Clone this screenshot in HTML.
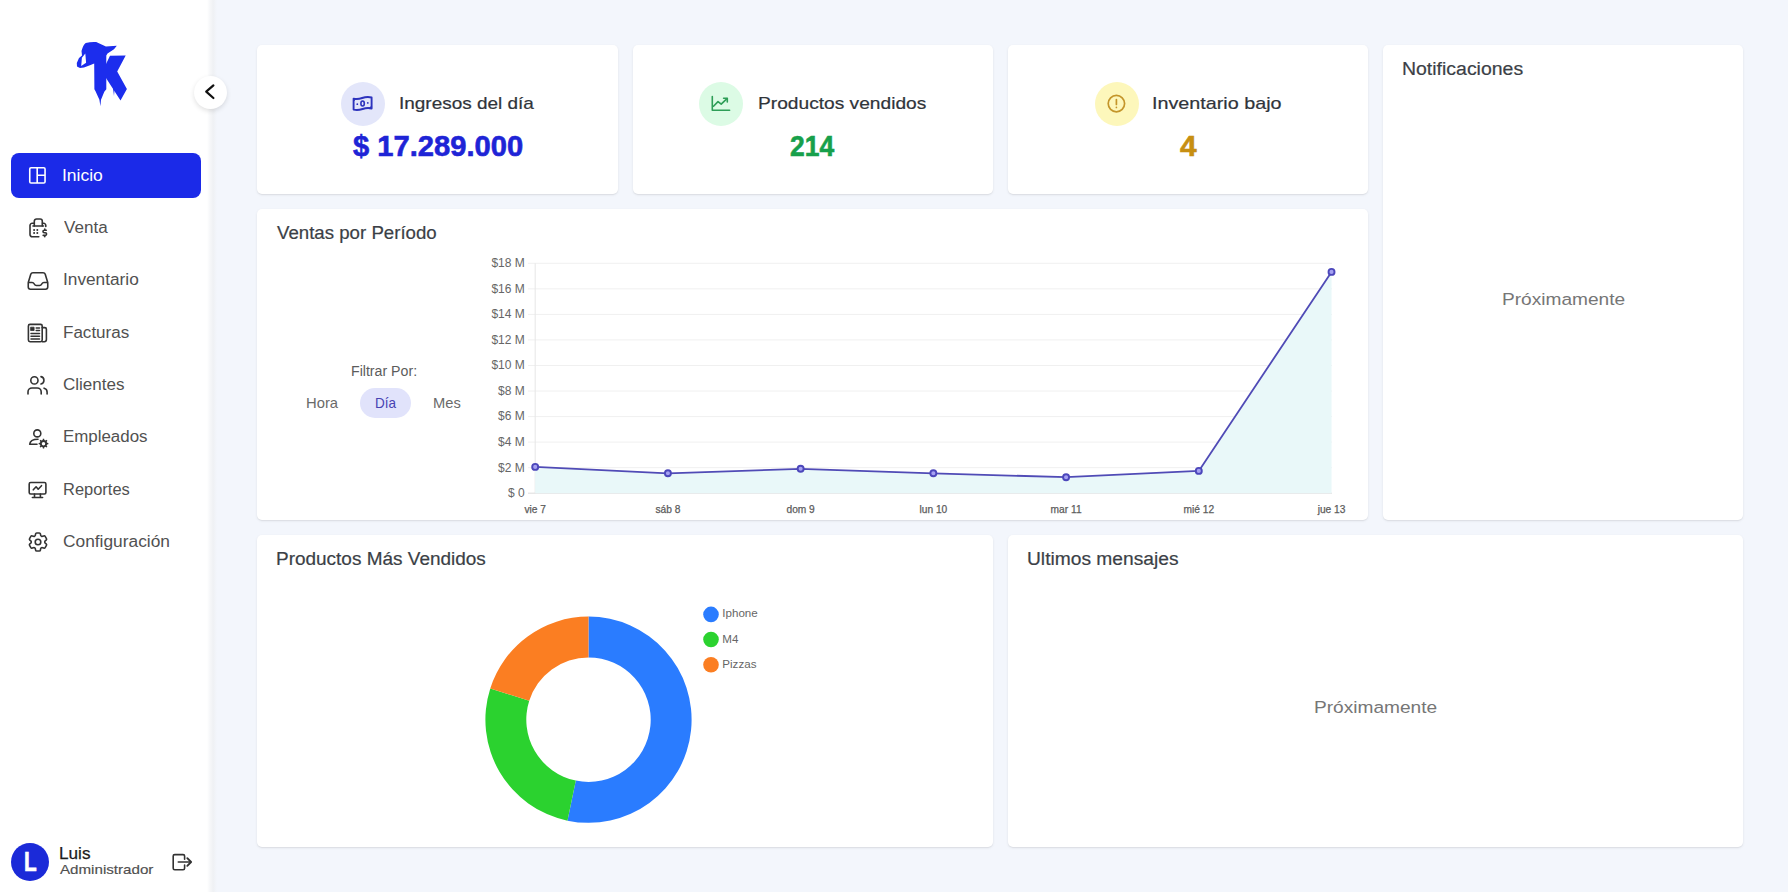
<!DOCTYPE html>
<html lang="es">
<head>
<meta charset="utf-8">
<title>Dashboard</title>
<style>
*{margin:0;padding:0;box-sizing:border-box;}
html,body{width:1788px;height:892px;overflow:hidden;}
body{background:#f3f6fc;font-family:"Liberation Sans",sans-serif;position:relative;color:#333;}
.abs{position:absolute;}
.t{position:absolute;white-space:nowrap;line-height:1;transform-origin:0 0;}
#sidebar{position:absolute;left:0;top:0;width:212px;height:892px;background:#fff;}
.card{position:absolute;background:#fff;border-radius:5px;box-shadow:0 1px 3px rgba(0,0,0,0.07),0 1px 1px rgba(0,0,0,0.05);}
.ico{position:absolute;width:24px;height:24px;}
</style>
</head>
<body>
<div id="sidebar">
  <div class="abs" style="left:207px;top:0;width:10px;height:892px;background:linear-gradient(90deg,#ffffff 0%,#f6f7f9 30%,#eff1f4 62%,#f3f6fc 100%);"></div>
  <svg class="abs" style="left:0;top:0" width="212" height="120" viewBox="0 0 212 120">
    <path fill="#1c2ded" d="M85.7 42.9 Q91 41.8 96.2 42.1 L105.9 46.5 L116.8 45.7 L114 49.3 L107.5 53.4 L106.3 55.5 L106.3 89.3 L104.3 91.7 L101 99.8 L100.4 106.3 L99.4 99.8 L95.4 90.9 L94.4 89.3 L94.2 63.5 L90.6 65.1 L84 67.5 L80 68 L77 66.5 L76.8 63 L79 58 L82 55.5 L81.5 51 Q83 45 85.7 42.9 Z"/>
    <path fill="#fff" d="M85.3 53.6 L86.1 62.7 L81.2 66 L81.9 57.8 Z"/>
    <path fill="#1c2ded" d="M110 55.8 L125.7 55.4 L117.2 71.5 L126.9 88.9 L120.5 100.6 L106 78 L106 63.9 Z"/>
    <path fill="#1c2ded" d="M113 88.3 L114.6 88.3 L114 96 Z"/>
  </svg>
  <div class="abs" style="left:194px;top:76px;width:33px;height:33px;border-radius:50%;background:#fff;box-shadow:0 2px 5px rgba(0,0,0,0.12);"></div>
  <svg class="abs" style="left:194px;top:76px" width="33" height="33" viewBox="0 0 33 33">
    <path d="M19.4 9.4 L12.2 15.6 L19.4 22" fill="none" stroke="#111" stroke-width="2.2" stroke-linecap="round" stroke-linejoin="round"/>
  </svg>
  <div class="abs" style="left:11px;top:153px;width:190px;height:45px;border-radius:8px;background:#1b2ae8;"></div>
  <svg class="ico" style="left:25px;top:163px" viewBox="0 0 24 24" fill="none" stroke="#fff" stroke-width="1.6">
    <rect x="4.75" y="4.75" width="15.3" height="15.3" rx="1.3"/>
    <path d="M12.2 4.75 V20.05 M12.2 12.3 H20.05"/>
  </svg>
  <svg class="ico" style="left:25.5px;top:216px" viewBox="0 0 24 24" fill="none" stroke="#333" stroke-width="1.6" stroke-linecap="round" stroke-linejoin="round">
    <path d="M8.3 10 V5.2 a2.2 2.2 0 0 1 2.2 -2.2 h3.6 a2.2 2.2 0 0 1 2.2 2.2 V10"/>
    <path d="M7 10 H17.5"/>
    <path d="M8 7.3 H6.2 a2.2 2.2 0 0 0 -2.2 2.2 V18.6 a2.2 2.2 0 0 0 2.2 2.2 H12.8"/>
    <path d="M16.6 7.3 H17.6 a2.2 2.2 0 0 1 2.2 2.2 V10.4"/>
    <path d="M8.1 14 v.01 M11.3 14 v.01 M8.1 17 v.01 M11.3 17 v.01" stroke-width="2"/>
    <path d="M20.3 14.2 h-2 a1.2 1.2 0 0 0 0 2.6 h1 a1.2 1.2 0 0 1 0 2.6 h-2.1 M18.8 13 v1.2 M18.8 19.4 v1.4"/>
  </svg>
  <svg class="ico" style="left:25.5px;top:268.5px" viewBox="0 0 24 24" fill="none" stroke="#333" stroke-width="1.6" stroke-linecap="round" stroke-linejoin="round">
    <path d="M2.25 13.5h3.86a2.25 2.25 0 012.012 1.244l.256.512a2.25 2.25 0 002.013 1.244h3.218a2.25 2.25 0 002.013-1.244l.256-.512a2.25 2.25 0 012.013-1.244h3.859m-19.5.338V18a2.25 2.25 0 002.25 2.250h15A2.25 2.25 0 0021.75 18v-4.162c0-.224-.034-.447-.1-.661L19.24 5.338a2.25 2.25 0 00-2.150-1.588H6.911a2.25 2.25 0 00-2.15 1.588L2.35 13.177a2.25 2.25 0 00-.1.661z"/>
  </svg>
  <svg class="ico" style="left:25px;top:320.5px" viewBox="0 0 24 24" fill="none" stroke="#333" stroke-width="1.6" stroke-linecap="round" stroke-linejoin="round">
    <rect x="3.4" y="3.4" width="13.8" height="17.3" rx="1.6"/>
    <path d="M17.2 6.6 H19.8 a1.6 1.6 0 0 1 1.6 1.6 V18.6 a2.1 2.1 0 0 1 -2.1 2.1 H17.2"/>
    <rect x="5.9" y="6.2" width="3.2" height="3.3" fill="#333" stroke-width="0.8"/>
    <path d="M11.2 6.9 h3.3 M11.2 9.4 h3.3 M6 12.5 h8.5 M6 15.3 h8.5 M6 18 h8.5" stroke-width="1.5"/>
  </svg>
  <svg class="ico" style="left:25px;top:373px" viewBox="0 0 24 24" fill="none" stroke="#333" stroke-width="1.6" stroke-linecap="round" stroke-linejoin="round">
    <circle cx="9.4" cy="7.4" r="3.6"/>
    <path d="M3 21v-2a4 4 0 0 1 4 -4h5.2a4 4 0 0 1 4 4v2"/>
    <path d="M16 3.6a3.8 3.8 0 0 1 0 7.4"/>
    <path d="M22.1 21v-2a4 4 0 0 0 -3 -3.85"/>
  </svg>
  <svg class="ico" style="left:25px;top:425px" viewBox="0 0 24 24" fill="none" stroke="#333" stroke-width="1.6" stroke-linecap="round" stroke-linejoin="round">
    <circle cx="12.3" cy="8.4" r="3.5"/>
    <path d="M13 14.3 C8.5 14.3 5 15.8 4.7 19.3 H12"/>
    <path d="M17.64 15.10 L17.85 13.84 L19.15 13.84 L19.36 15.10 L20.43 15.55 L21.47 14.80 L22.40 15.73 L21.65 16.77 L22.10 17.84 L23.36 18.05 L23.36 19.35 L22.10 19.56 L21.65 20.63 L22.40 21.67 L21.47 22.60 L20.43 21.85 L19.36 22.30 L19.15 23.56 L17.85 23.56 L17.64 22.30 L16.57 21.85 L15.53 22.60 L14.60 21.67 L15.35 20.63 L14.90 19.56 L13.64 19.35 L13.64 18.05 L14.90 17.84 L15.35 16.77 L14.60 15.73 L15.53 14.80 L16.57 15.55 Z M20.25 18.70 A1.75 1.75 0 1 0 16.75 18.70 A1.75 1.75 0 1 0 20.25 18.70 Z" fill="#333" stroke="none" fill-rule="evenodd"/>
  </svg>
  <svg class="ico" style="left:25px;top:477px" viewBox="0 0 24 24" fill="none" stroke="#333" stroke-width="1.6" stroke-linecap="round" stroke-linejoin="round">
    <rect x="4.2" y="5.5" width="16.7" height="11.5" rx="1.5"/>
    <path d="M9.5 17 v3.4 M15.4 17 v3.4 M7.4 20.5 H17.6"/>
    <path d="M8.3 12.8 L11.1 9.8 L13.2 12.2 L16.5 8.7"/>
  </svg>
  <svg class="ico" style="left:25.5px;top:529.5px" viewBox="0 0 24 24" fill="none" stroke="#333" stroke-width="1.6" stroke-linecap="round" stroke-linejoin="round">
    <path d="M9.594 3.94c.09-.542.56-.94 1.11-.94h2.593c.55 0 1.02.398 1.11.94l.213 1.281c.063.374.313.686.645.87.074.04.147.083.22.127.325.196.72.257 1.075.124l1.217-.456a1.125 1.125 0 011.37.49l1.296 2.247a1.125 1.125 0 01-.26 1.431l-1.003.827c-.293.241-.438.613-.43.992a7.723 7.723 0 010 .255c-.008.378.137.75.43.991l1.004.827c.424.35.534.955.26 1.430l-1.298 2.247a1.125 1.125 0 01-1.369.491l-1.217-.456c-.355-.133-.75-.072-1.076.124a6.47 6.47 0 01-.22.128c-.331.183-.581.495-.644.869l-.213 1.281c-.09.543-.56.94-1.11.94h-2.594c-.55 0-1.019-.398-1.11-.94l-.213-1.281c-.062-.374-.312-.686-.644-.87a6.52 6.52 0 01-.22-.127c-.325-.196-.72-.257-1.076-.124l-1.217.456a1.125 1.125 0 01-1.369-.49l-1.297-2.247a1.125 1.125 0 01.26-1.431l1.004-.827c.292-.24.437-.613.43-.991a6.932 6.932 0 010-.255c.007-.38-.138-.751-.43-.992l-1.004-.827a1.125 1.125 0 01-.26-1.430l1.297-2.247a1.125 1.125 0 011.37-.491l1.216.456c.356.133.751.072 1.076-.124.072-.044.146-.086.22-.128.332-.183.582-.495.644-.869l.214-1.28z"/>
    <circle cx="12" cy="12" r="2.8"/>
  </svg>
  <div class="abs" style="left:11px;top:843px;width:38px;height:38px;border-radius:50%;background:#1b2ad8;"></div>
  <div class="t" style="left:24px;top:848px;font-size:28px;font-weight:bold;color:#fff;transform:scaleX(0.74);-webkit-text-stroke:0.7px #fff;">L</div>
  <svg class="abs" style="left:170px;top:850px" width="24" height="24" viewBox="0 0 24 24" fill="none" stroke="#333" stroke-width="1.6" stroke-linecap="round" stroke-linejoin="round">
    <path d="M14.6 9.3 V6.1 a1.5 1.5 0 0 0 -1.5 -1.5 H4.7 a1.5 1.5 0 0 0 -1.5 1.5 V18.2 a1.5 1.5 0 0 0 1.5 1.5 H13.1 a1.5 1.5 0 0 0 1.5 -1.5 V15"/>
    <path d="M8.3 12 H20.4"/>
    <path d="M17.3 8.2 L21.1 12 L17.3 15.8" stroke-width="1.9"/>
  </svg>
</div>

<div class="card" style="left:257px;top:45px;width:360.5px;height:148.5px;"></div>
<div class="card" style="left:633px;top:45px;width:360px;height:148.5px;"></div>
<div class="card" style="left:1008px;top:45px;width:360px;height:148.5px;"></div>
<div class="card" style="left:1383px;top:45px;width:360px;height:475px;"></div>
<div class="card" style="left:257px;top:208.5px;width:1111px;height:311.5px;"></div>
<div class="card" style="left:257px;top:535px;width:736px;height:312px;"></div>
<div class="card" style="left:1008px;top:535px;width:735px;height:312px;"></div>

<div class="abs" style="left:341px;top:82px;width:44px;height:44px;border-radius:50%;background:#e3e6fa;"></div>
<svg class="abs" style="left:350px;top:94px" width="26" height="18" viewBox="0 0 26 18" fill="none" stroke="#2d33bd" stroke-width="1.9" stroke-linejoin="round">
  <path d="M3.6 4.6 C6.5 5.4 9.2 5 12.2 4 C15.2 3 18.5 2.7 21.6 3.5 V14.5 C18.5 13.7 15.6 14 12.6 15 C9.6 16 6.5 16.4 3.6 15.6 Z"/>
  <ellipse cx="12.6" cy="9.5" rx="1.7" ry="2.5" stroke-width="1.6"/>
  <circle cx="7.3" cy="10.2" r="0.9" fill="#2d33bd" stroke="none"/>
  <circle cx="17.8" cy="8.9" r="0.9" fill="#2d33bd" stroke="none"/>
  <path d="M3.6 4.6 L6 5.1 L3.6 7 Z M21.6 14.5 L19.2 14 L21.6 12.2 Z" fill="#2d33bd" stroke-width="0.8"/>
</svg>
<div class="abs" style="left:699px;top:82px;width:44px;height:44px;border-radius:50%;background:#dcfbe5;"></div>
<svg class="abs" style="left:709px;top:93px" width="24" height="20" viewBox="0 0 24 20" fill="none" stroke="#2d9e57" stroke-width="1.6" stroke-linecap="round" stroke-linejoin="round">
  <path d="M3.3 3.5 V17.2 H20.6"/>
  <path d="M4.5 13.2 L9 8.6 L12.2 11.2 L18 5.6"/>
  <path d="M14.6 5.2 H18.3 V8.9"/>
</svg>
<div class="abs" style="left:1095px;top:82px;width:44px;height:44px;border-radius:50%;background:#fdf7bb;"></div>
<svg class="abs" style="left:1104px;top:91px" width="25" height="25" viewBox="0 0 25 25" fill="none" stroke="#c4952a" stroke-width="1.7" stroke-linecap="round">
  <circle cx="12.4" cy="12.6" r="8.2"/>
  <path d="M12.4 8.6 V13.4 M12.4 16.4 v.01"/>
</svg>
<div class="abs" style="left:360px;top:388px;width:51px;height:29.5px;border-radius:15px;background:#e1e3fb;"></div>

<svg class="abs" style="left:0;top:0;pointer-events:none" width="1788" height="892" viewBox="0 0 1788 892">
<line x1="528" y1="493.20" x2="1332" y2="493.20" stroke="#dcdcdc" stroke-width="1"/>
<line x1="528" y1="467.66" x2="1332" y2="467.66" stroke="#f0f0f0" stroke-width="1"/>
<line x1="528" y1="442.11" x2="1332" y2="442.11" stroke="#f0f0f0" stroke-width="1"/>
<line x1="528" y1="416.57" x2="1332" y2="416.57" stroke="#f0f0f0" stroke-width="1"/>
<line x1="528" y1="391.02" x2="1332" y2="391.02" stroke="#f0f0f0" stroke-width="1"/>
<line x1="528" y1="365.48" x2="1332" y2="365.48" stroke="#f0f0f0" stroke-width="1"/>
<line x1="528" y1="339.93" x2="1332" y2="339.93" stroke="#f0f0f0" stroke-width="1"/>
<line x1="528" y1="314.39" x2="1332" y2="314.39" stroke="#f0f0f0" stroke-width="1"/>
<line x1="528" y1="288.84" x2="1332" y2="288.84" stroke="#f0f0f0" stroke-width="1"/>
<line x1="528" y1="263.30" x2="1332" y2="263.30" stroke="#f0f0f0" stroke-width="1"/>
<line x1="535.2" y1="263.3" x2="535.2" y2="493.2" stroke="#e6e6e6" stroke-width="1"/>
<polygon points="535.20,493.2 535.20,466.90 667.92,473.30 800.64,468.80 933.36,473.30 1066.08,477.20 1198.80,470.90 1331.52,271.90 1331.52,493.2" fill="#e9f8f9"/>
<polyline points="535.20,466.90 667.92,473.30 800.64,468.80 933.36,473.30 1066.08,477.20 1198.80,470.90 1331.52,271.90" fill="none" stroke="#504bb6" stroke-width="1.8" stroke-linejoin="round"/>
<circle cx="535.20" cy="466.90" r="3.0" fill="#a5a1f2" stroke="#4c47bb" stroke-width="1.9"/>
<circle cx="667.92" cy="473.30" r="3.0" fill="#a5a1f2" stroke="#4c47bb" stroke-width="1.9"/>
<circle cx="800.64" cy="468.80" r="3.0" fill="#a5a1f2" stroke="#4c47bb" stroke-width="1.9"/>
<circle cx="933.36" cy="473.30" r="3.0" fill="#a5a1f2" stroke="#4c47bb" stroke-width="1.9"/>
<circle cx="1066.08" cy="477.20" r="3.0" fill="#a5a1f2" stroke="#4c47bb" stroke-width="1.9"/>
<circle cx="1198.80" cy="470.90" r="3.0" fill="#a5a1f2" stroke="#4c47bb" stroke-width="1.9"/>
<circle cx="1331.52" cy="271.90" r="3.0" fill="#a5a1f2" stroke="#4c47bb" stroke-width="1.9"/>
<text x="524.8" y="497.10" text-anchor="end" font-family="Liberation Sans" font-size="12" fill="#666">$ 0</text>
<text x="524.8" y="471.56" text-anchor="end" font-family="Liberation Sans" font-size="12" fill="#666">$2 M</text>
<text x="524.8" y="446.01" text-anchor="end" font-family="Liberation Sans" font-size="12" fill="#666">$4 M</text>
<text x="524.8" y="420.47" text-anchor="end" font-family="Liberation Sans" font-size="12" fill="#666">$6 M</text>
<text x="524.8" y="394.92" text-anchor="end" font-family="Liberation Sans" font-size="12" fill="#666">$8 M</text>
<text x="524.8" y="369.38" text-anchor="end" font-family="Liberation Sans" font-size="12" fill="#666">$10 M</text>
<text x="524.8" y="343.83" text-anchor="end" font-family="Liberation Sans" font-size="12" fill="#666">$12 M</text>
<text x="524.8" y="318.29" text-anchor="end" font-family="Liberation Sans" font-size="12" fill="#666">$14 M</text>
<text x="524.8" y="292.74" text-anchor="end" font-family="Liberation Sans" font-size="12" fill="#666">$16 M</text>
<text x="524.8" y="267.20" text-anchor="end" font-family="Liberation Sans" font-size="12" fill="#666">$18 M</text>
<text x="535.20" y="512.6" text-anchor="middle" font-family="Liberation Sans" font-size="10.2" fill="#5c5c5c" stroke="#5c5c5c" stroke-width="0.25">vie 7</text>
<text x="667.92" y="512.6" text-anchor="middle" font-family="Liberation Sans" font-size="10.2" fill="#5c5c5c" stroke="#5c5c5c" stroke-width="0.25">sáb 8</text>
<text x="800.64" y="512.6" text-anchor="middle" font-family="Liberation Sans" font-size="10.2" fill="#5c5c5c" stroke="#5c5c5c" stroke-width="0.25">dom 9</text>
<text x="933.36" y="512.6" text-anchor="middle" font-family="Liberation Sans" font-size="10.2" fill="#5c5c5c" stroke="#5c5c5c" stroke-width="0.25">lun 10</text>
<text x="1066.08" y="512.6" text-anchor="middle" font-family="Liberation Sans" font-size="10.2" fill="#5c5c5c" stroke="#5c5c5c" stroke-width="0.25">mar 11</text>
<text x="1198.80" y="512.6" text-anchor="middle" font-family="Liberation Sans" font-size="10.2" fill="#5c5c5c" stroke="#5c5c5c" stroke-width="0.25">mié 12</text>
<text x="1331.52" y="512.6" text-anchor="middle" font-family="Liberation Sans" font-size="10.2" fill="#5c5c5c" stroke="#5c5c5c" stroke-width="0.25">jue 13</text>
<path d="M588.50 616.60 A103.1 103.1 0 1 1 567.46 820.63 L575.81 780.59 A62.2 62.2 0 1 0 588.50 657.50 Z" fill="#2a7cff"/>
<path d="M567.46 820.63 A103.1 103.1 0 0 1 490.26 688.42 L529.23 700.83 A62.2 62.2 0 0 0 575.81 780.59 Z" fill="#2bd22f"/>
<path d="M490.26 688.42 A103.1 103.1 0 0 1 588.50 616.60 L588.50 657.50 A62.2 62.2 0 0 0 529.23 700.83 Z" fill="#fb7e22"/>
<circle cx="711" cy="614.40" r="7.8" fill="#2a7cff"/>
<text x="722.3" y="617.40" font-family="Liberation Sans" font-size="11.6" fill="#666">Iphone</text>
<circle cx="711" cy="639.55" r="7.8" fill="#2bd22f"/>
<text x="722.3" y="642.55" font-family="Liberation Sans" font-size="11.6" fill="#666">M4</text>
<circle cx="711" cy="664.70" r="7.8" fill="#fb7e22"/>
<text x="722.3" y="667.70" font-family="Liberation Sans" font-size="11.6" fill="#666">Pizzas</text>
</svg>
<div class="t" id="m_inicio" style="left:62.00px;top:167.80px;font-size:16px;color:#ffffff;transform:scaleX(1.0926);">Inicio</div>
<div class="t" id="m_venta" style="left:64.00px;top:219.90px;font-size:16px;color:#515151;transform:scaleX(1.0663);">Venta</div>
<div class="t" id="m_inv" style="left:63.00px;top:272.10px;font-size:16px;color:#515151;transform:scaleX(1.0781);">Inventario</div>
<div class="t" id="m_fact" style="left:63.00px;top:324.50px;font-size:16px;color:#515151;transform:scaleX(1.0641);">Facturas</div>
<div class="t" id="m_cli" style="left:63.00px;top:377.00px;font-size:16px;color:#515151;transform:scaleX(1.0644);">Clientes</div>
<div class="t" id="m_emp" style="left:63.00px;top:429.20px;font-size:16px;color:#515151;transform:scaleX(1.0553);">Empleados</div>
<div class="t" id="m_rep" style="left:63.00px;top:482.00px;font-size:16px;color:#515151;transform:scaleX(1.0282);">Reportes</div>
<div class="t" id="m_conf" style="left:63.00px;top:534.00px;font-size:16px;color:#515151;transform:scaleX(1.0833);">Configuración</div>
<div class="t" id="luis" style="left:59.40px;top:844.65px;font-size:17.0px;color:#1c1c1c;transform:scaleX(1.0087);-webkit-text-stroke:0.25px #1c1c1c;">Luis</div>
<div class="t" id="admin" style="left:60.40px;top:864.42px;font-size:12.1px;color:#4f4f4f;transform:scaleX(1.2515);-webkit-text-stroke:0.15px #4f4f4f;">Administrador</div>
<div class="t" id="lbl1" style="left:399.00px;top:95.03px;font-size:16.2px;color:#30343a;transform:scaleX(1.1711);-webkit-text-stroke:0.2px #30343a;">Ingresos del día</div>
<div class="t" id="val1" style="left:353.00px;top:131.27px;font-size:29.8px;color:#1e24d6;font-weight:700;transform:scaleX(0.9787);-webkit-text-stroke:0.6px #1e24d6;">$ 17.289.000</div>
<div class="t" id="lbl2" style="left:758.00px;top:95.03px;font-size:16.2px;color:#30343a;transform:scaleX(1.1837);-webkit-text-stroke:0.2px #30343a;">Productos vendidos</div>
<div class="t" id="val2" style="left:790.00px;top:131.66px;font-size:29.1px;color:#17a04b;font-weight:700;transform:scaleX(0.9091);-webkit-text-stroke:0.6px #17a04b;">214</div>
<div class="t" id="lbl3" style="left:1152.00px;top:95.03px;font-size:16.2px;color:#30343a;transform:scaleX(1.2194);-webkit-text-stroke:0.2px #30343a;">Inventario bajo</div>
<div class="t" id="val3" style="left:1180.00px;top:131.86px;font-size:29.1px;color:#c78f12;font-weight:700;transform:scaleX(1.0286);-webkit-text-stroke:0.6px #c78f12;">4</div>
<div class="t" id="t_notif" style="left:1402.00px;top:60.30px;font-size:18.0px;color:#3b3f46;transform:scaleX(1.0809);-webkit-text-stroke:0.2px #3b3f46;">Notificaciones</div>
<div class="t" id="prox1" style="left:1502.00px;top:290.81px;font-size:17.4px;color:#767676;transform:scaleX(1.0982);">Próximamente</div>
<div class="t" id="t_ventas" style="left:277.00px;top:223.80px;font-size:18.0px;color:#3b3f46;transform:scaleX(1.0364);-webkit-text-stroke:0.2px #3b3f46;">Ventas por Período</div>
<div class="t" id="t_prod" style="left:276.00px;top:550.00px;font-size:18.0px;color:#3b3f46;transform:scaleX(1.0538);-webkit-text-stroke:0.2px #3b3f46;">Productos Más Vendidos</div>
<div class="t" id="t_ult" style="left:1027.00px;top:550.00px;font-size:18.0px;color:#3b3f46;transform:scaleX(1.0665);-webkit-text-stroke:0.2px #3b3f46;">Ultimos mensajes</div>
<div class="t" id="prox2" style="left:1314.00px;top:699.31px;font-size:17.4px;color:#767676;transform:scaleX(1.0982);">Próximamente</div>
<div class="t" id="filtrar" style="left:351.00px;top:364.97px;font-size:13.8px;color:#5c5c5c;transform:scaleX(1.0261);">Filtrar Por:</div>
<div class="t" id="hora" style="left:306.00px;top:396.69px;font-size:13.9px;color:#6a6a6a;transform:scaleX(1.0630);">Hora</div>
<div class="t" id="dia" style="left:375.00px;top:396.69px;font-size:13.9px;color:#4742b3;transform:scaleX(0.9736);">Día</div>
<div class="t" id="mes" style="left:433.00px;top:396.69px;font-size:13.9px;color:#6a6a6a;transform:scaleX(1.0571);">Mes</div>
</body>
</html>
